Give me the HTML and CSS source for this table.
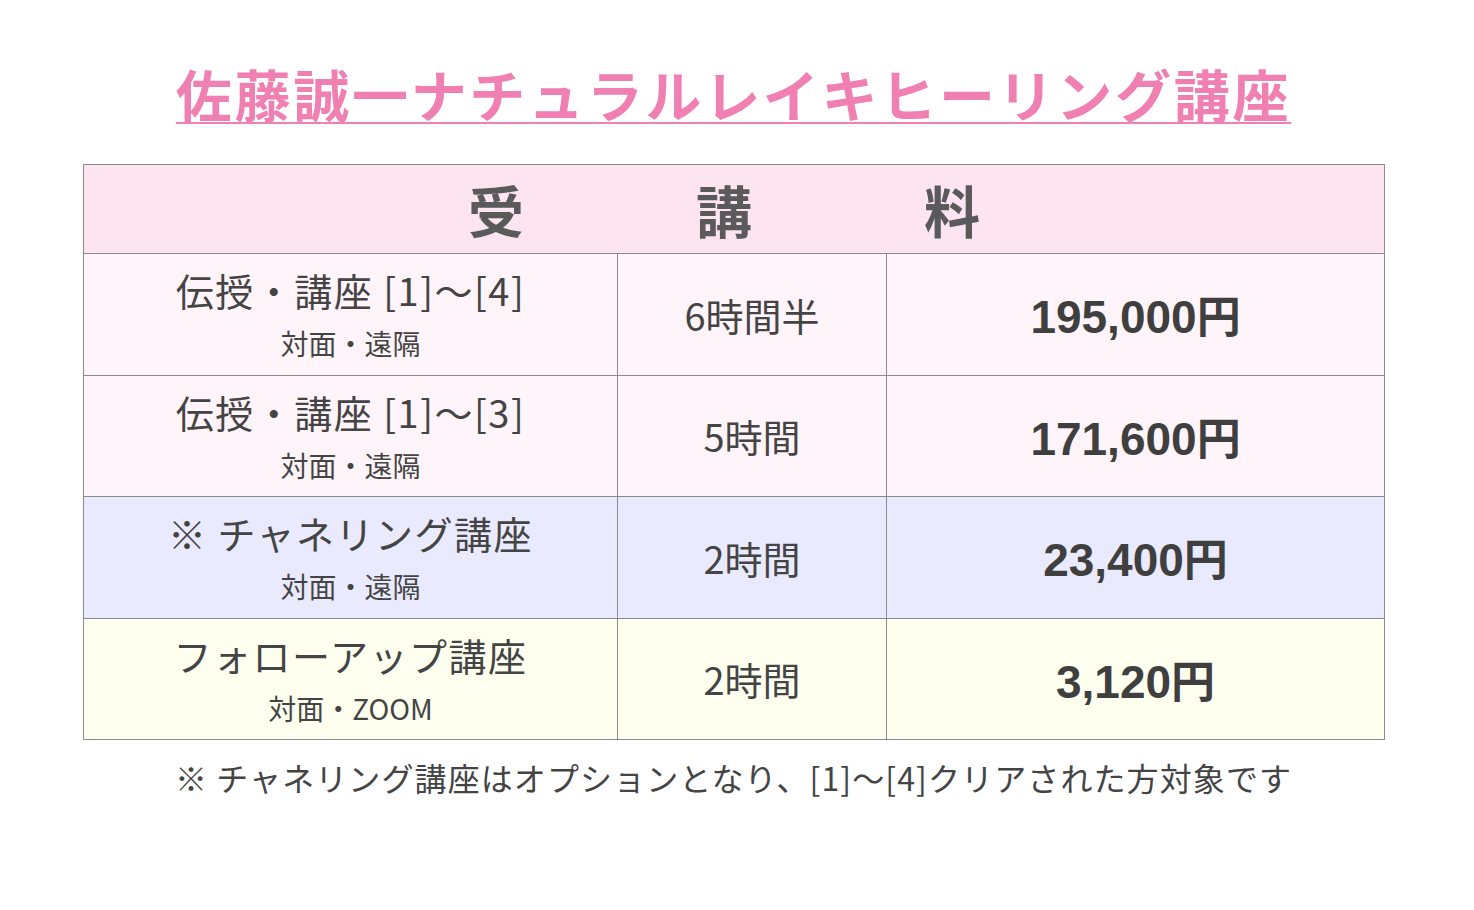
FILE: index.html
```html
<!DOCTYPE html>
<html lang="ja">
<head>
<meta charset="utf-8">
<title>佐藤誠一ナチュラルレイキヒーリング講座</title>
<link rel="stylesheet" href="styles.css">
</head>
<body>
<main class="page">
  <h1 class="title">佐藤誠一ナチュラルレイキヒーリング講座</h1>
  <table class="fees">
    <colgroup>
      <col class="c1"><col class="c2"><col class="c3">
    </colgroup>
    <thead>
      <tr><th colspan="3" class="head">受　　講　　料</th></tr>
    </thead>
    <tbody>
      <tr class="pink">
        <td class="course"><div class="main">伝授・講座 [1]〜[4]</div><div class="sub">対面・遠隔</div></td>
        <td class="time">6時間半</td>
        <td class="price">195,000<span class="yen">円</span></td>
      </tr>
      <tr class="pink">
        <td class="course"><div class="main">伝授・講座 [1]〜[3]</div><div class="sub">対面・遠隔</div></td>
        <td class="time">5時間</td>
        <td class="price">171,600<span class="yen">円</span></td>
      </tr>
      <tr class="blue">
        <td class="course"><div class="main">※ チャネリング講座</div><div class="sub">対面・遠隔</div></td>
        <td class="time">2時間</td>
        <td class="price">23,400<span class="yen">円</span></td>
      </tr>
      <tr class="yellow">
        <td class="course"><div class="main">フォローアップ講座</div><div class="sub">対面・ZOOM</div></td>
        <td class="time">2時間</td>
        <td class="price">3,120<span class="yen">円</span></td>
      </tr>
    </tbody>
  </table>
  <p class="note">※ チャネリング講座はオプションとなり、[1]〜[4]クリアされた方対象です</p>
</main>
</body>
</html>
```
FILE: styles.css
```css
html, body {
  margin: 0;
  padding: 0;
  background: #ffffff;
}
body {
  font-family: "Noto Sans CJK JP", "Noto Sans", sans-serif;
  color: #444444;
}
.page {
  width: 1301px;
  padding: 55px 0 0 83px;
}
.title {
  margin: 0 0 34px 0;
  text-align: center;
  font-size: 56px;
  line-height: 75px;
  font-weight: 700;
  color: #f07fb2;
  text-decoration: underline;
  text-decoration-thickness: 2px;
  text-underline-offset: 5px;
  letter-spacing: 2.7px;
}
.fees {
  width: 1301px;
  border-collapse: collapse;
  table-layout: fixed;
}
.c1 { width: 534px; }
.c2 { width: 269px; }
.c3 { width: 498px; }
.fees th, .fees td {
  border: 1px solid #8a8a8a;
  text-align: center;
  vertical-align: middle;
  padding: 0;
}
.head {
  height: 88px;
  background: #fce4f0;
  color: #5a5a5a;
  font-size: 56px;
  font-weight: 700;
  letter-spacing: 20px;
  line-height: 1;
  padding: 0 8px 4px 0;
}
.fees tbody tr { height: 121.5px; }
.pink td { background: #fff4fa; }
.blue td { background: #eaeaff; }
.yellow td { background: #fffff0; }
.course .main {
  font-size: 38px;
  line-height: 48px;
  letter-spacing: 1.5px;
  color: #444444;
}
.course .sub {
  font-size: 28px;
  line-height: 38px;
  color: #444444;
  margin-top: 10px;
}
.time {
  font-size: 38px;
  color: #444444;
}
.price {
  font-family: "Liberation Sans", "Noto Sans CJK JP", sans-serif;
  font-size: 46px;
  font-weight: 700;
  color: #3f3f3f;
}
.price .yen {
  font-family: "Noto Sans CJK JP", sans-serif;
  font-size: 44px;
}
.note {
  margin: 14px 0 0 0;
  text-align: center;
  font-size: 32px;
  line-height: 46px;
  letter-spacing: 1.1px;
  color: #444444;
}
```
